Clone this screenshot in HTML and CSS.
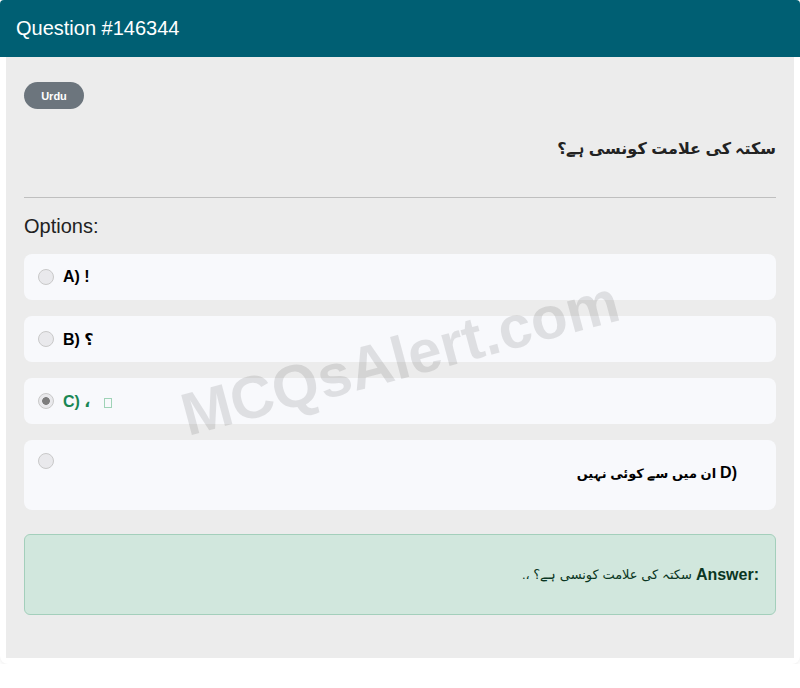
FILE: index.html
```html
<!DOCTYPE html>
<html lang="en">
<head>
<meta charset="utf-8">
<title>Question #146344</title>
<link rel="stylesheet" href="styles.css">
</head>
<body>
<div class="card">
  <div class="card-header">Question #146344</div>
  <div class="card-body">
    <div class="watermark">MCQsAlert.com</div>
    <span class="badge">Urdu</span>
    <h2 class="question" dir="rtl">سکتہ کی علامت کونسی ہے؟</h2>
    <hr class="divider">
    <h3 class="options-title">Options:</h3>
    <div class="options">
      <label class="option"><input type="radio" class="radio" disabled><span class="opt-text">A) !</span></label>
      <label class="option"><input type="radio" class="radio" disabled><span class="opt-text">B) ؟</span></label>
      <label class="option correct"><input type="radio" class="radio checked" disabled><span class="opt-text">C) ،</span><span class="tofu"></span></label>
      <label class="option tall"><input type="radio" class="radio" disabled><span class="opt-rtl"><span class="urdu" dir="rtl">ان میں سے کوئی نہیں</span><span class="latin">D)</span></span></label>
    </div>
    <div class="answer"><span class="answer-text" dir="rtl">سکتہ کی علامت کونسی ہے؟ ،.</span><span class="answer-label">Answer:</span></div>
  </div>
</div>
</body>
</html>
```
FILE: styles.css
```css
* { box-sizing: border-box; }
html, body { margin: 0; padding: 0; background: #ffffff; }
body {
  font-family: "Liberation Sans", "DejaVu Sans", Arial, sans-serif;
  color: #212529;
}
.card {
  width: 800px;
  background: #ffffff;
  border-radius: 4px 4px 8px 8px;
  overflow: hidden;
  padding-bottom: 6px;
  box-shadow: 0 1px 4px rgba(0,0,0,0.08);
}
.card-header {
  background: #005f73;
  color: #ffffff;
  height: 57px;
  display: flex;
  align-items: center;
  padding: 0 16px;
  font-size: 20px;
}
.card-body {
  position: relative;
  margin: 0 6px;
  background: #ececec;
  padding: 25px 18px 43px;
  overflow: hidden;
}
.watermark {
  position: absolute;
  left: 50%;
  top: 50%;
  transform: translate(-50%, -50%) rotate(-15deg);
  font-size: 60px;
  font-weight: bold;
  color: rgba(0,0,0,0.1);
  white-space: nowrap;
  pointer-events: none;
  z-index: 2;
}
.badge {
  display: inline-flex;
  align-items: center;
  justify-content: center;
  width: 60px;
  height: 27px;
  border-radius: 14px;
  background: #6c757d;
  color: #ffffff;
  font-size: 11px;
  font-weight: bold;
}
.question {
  margin: 26px 0 0;
  font-size: 16px;
  font-weight: bold;
  text-align: right;
  color: #222222;
  line-height: 28px;
}
.divider {
  margin: 34px 0 0;
  border: 0;
  border-top: 1px solid #bfbfbf;
  height: 0;
}
.options-title {
  margin: 16px 0 0;
  font-size: 20px;
  font-weight: normal;
  line-height: 24px;
  color: #222222;
}
.options {
  margin-top: 16px;
  display: flex;
  flex-direction: column;
  gap: 16px;
}
.option {
  display: flex;
  align-items: center;
  height: 46px;
  padding: 0 14px;
  background: #f8f9fc;
  border-radius: 8px;
}
.option.tall {
  height: 70px;
  align-items: flex-start;
  padding-top: 13px;
}
.radio {
  appearance: none;
  -webkit-appearance: none;
  margin: 0;
  width: 16px;
  height: 16px;
  border-radius: 50%;
  border: 1px solid #c9c9c9;
  background: #e9e9ec;
  flex: none;
}
.radio.checked {
  background: radial-gradient(circle, #7d7d7d 0 3.5px, #e9e9ec 4.2px);
}
.opt-text {
  margin-left: 9px;
  font-size: 16px;
  font-weight: bold;
  color: #000000;
}
.option.correct .opt-text { color: #198754; }
.tofu {
  display: inline-block;
  width: 8px;
  height: 10px;
  border: 1px solid #9fd3b7;
  margin-left: 14px;
  margin-top: 4px;
}
.opt-rtl {
  flex: 1;
  display: flex;
  justify-content: flex-end;
  align-items: baseline;
  gap: 4px;
  padding-top: 11px;
  padding-right: 25px;
  font-weight: bold;
  color: #000000;
}
.opt-rtl .urdu { font-size: 13px; }
.opt-rtl .latin { font-size: 16px; }
.answer {
  margin-top: 24px;
  height: 81px;
  display: flex;
  justify-content: flex-end;
  align-items: center;
  gap: 4px;
  padding: 0 16px;
  background: #d1e7dd;
  border: 1px solid #a3cfbb;
  border-radius: 6px;
  color: #0a3622;
}
.answer-text {
  font-size: 13px;
}
.answer-label {
  font-weight: bold;
  font-size: 16px;
}
```
